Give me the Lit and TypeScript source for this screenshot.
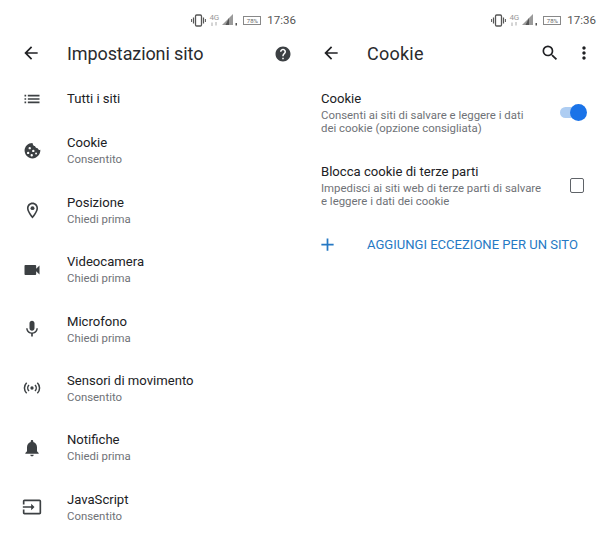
import { LitElement, html, css, svg } from "lit";
import { customElement } from "lit/decorators.js";

const icons: Record<string, unknown> = {
  list: svg`<path d="M3 13h2v-2H3v2zm0 4h2v-2H3v2zm0-8h2V7H3v2zm4 4h14v-2H7v2zm0 4h14v-2H7v2zM7 7v2h14V7H7z"/>`,
  cookie: svg`<path fill-rule="evenodd" d="M21.9 11.2c-1.7.2-2.9-.6-3.2-2.2-1.7.3-3.3-1-3.5-2.7-1.6.1-2.9-1.2-3.2-3.9C6.6 2.3 2 6.6 2 12c0 5.5 4.5 10 10 10 5.6 0 10.300-4.700 9.900-10.800zM8.500 7.500a1.500 1.500 0 1 1 0 3 1.500 1.500 0 0 1 0-3zM6.500 13.500a1.500 1.500 0 1 1 0 3 1.500 1.500 0 0 1 0-3zM13 11a1.500 1.500 0 1 1 0 3 1.500 1.500 0 0 1 0-3zM11 16.500a1.500 1.500 0 1 1 0 3 1.500 1.500 0 0 1 0-3zM16.500 14.500a1.200 1.200 0 1 1 0 2.400 1.200 1.200 0 0 1 0-2.400z"/>`,
  pin: svg`<path d="M12 2C8.130 2 5 5.130 5 9c0 5.250 7 13 7 13s7-7.750 7-13c0-3.870-3.130-7-7-7zM7 9c0-2.760 2.240-5 5-5s5 2.240 5 5c0 2.880-2.880 7.190-5 9.880C9.920 16.210 7 11.850 7 9z"/><circle cx="12" cy="9" r="2.500"/>`,
  video: svg`<path d="M17 10.500V7c0-.550-.450-1-1-1H4c-.550 0-1 .450-1 1v10c0 .550.450 1 1 1h12c.550 0 1-.450 1-1v-3.500l4 4v-11l-4 4z"/>`,
  mic: svg`<path d="M12 14c1.660 0 3-1.340 3-3V5c0-1.660-1.340-3-3-3S9 3.340 9 5v6c0 1.660 1.340 3 3 3zm5.300-3c0 3-2.540 5.100-5.300 5.100S6.700 14 6.700 11H5c0 3.410 2.720 6.230 6 6.720V21h2v-3.280c3.280-.480 6-3.300 6-6.720h-1.700z"/>`,
  sensor: svg`<circle cx="12" cy="12" r="2"/><path fill="none" stroke="currentColor" stroke-width="1.800" d="M8.400 8.400a5.100 5.100 0 0 0 0 7.200M15.600 8.400a5.100 5.100 0 0 1 0 7.200M5.600 5.600a9 9 0 0 0 0 12.800M18.400 5.600a9 9 0 0 1 0 12.800"/>`,
  bell: svg`<path d="M12 22c1.100 0 2-.900 2-2h-4c0 1.100.900 2 2 2zm6-6v-5c0-3.070-1.630-5.640-4.500-6.320V4c0-.830-.670-1.500-1.500-1.500s-1.500.670-1.500 1.500v.680C7.640 5.360 6 7.920 6 11v5l-2 2v1h16v-1l-2-2z"/>`,
  input: svg`<path d="M21 3.010H3c-1.100 0-2 .900-2 2V9h2V4.990h18v14.030H3V15H1v4.010c0 1.100.900 1.980 2 1.980h18c1.100 0 2-.880 2-1.980v-14a2 2 0 0 0-2-2zM11 16l4-4-4-4v3H1v2h10v3z"/>`,
  back: svg`<path d="M20 11H7.830l5.590-5.590L12 4l-8 8 8 8 1.410-1.410L7.830 13H20v-2z"/>`,
  help: svg`<path d="M12 2C6.480 2 2 6.480 2 12s4.480 10 10 10 10-4.480 10-10S17.520 2 12 2zm1 17h-2v-2h2v2zm2.070-7.750-.900.920C13.450 12.900 13 13.500 13 15h-2v-.500c0-1.100.450-2.100 1.170-2.830l1.240-1.260c.370-.360.590-.860.590-1.410 0-1.100-.900-2-2-2s-2 .900-2 2H8c0-2.210 1.790-4 4-4s4 1.790 4 4c0 .880-.360 1.680-.930 2.250z"/>`,
  search: svg`<path d="M15.500 14h-.790l-.280-.270A6.470 6.470 0 0 0 16 9.500 6.500 6.500 0 1 0 9.500 16c1.610 0 3.090-.590 4.230-1.570l.270.280v.790l5 4.990L20.490 19l-4.990-5zm-6 0C7.010 14 5 11.990 5 9.500S7.010 5 9.500 5 14 7.010 14 9.500 11.990 14 9.500 14z"/>`,
  more: svg`<path d="M12 8c1.100 0 2-.900 2-2s-.900-2-2-2-2 .900-2 2 .900 2 2 2zm0 2c-1.100 0-2 .900-2 2s.900 2 2 2 2-.900 2-2-.900-2-2-2zm0 6c-1.100 0-2 .900-2 2s.900 2 2 2 2-.900 2-2-.900-2-2-2z"/>`,
  plus: svg`<path d="M19 13h-6v6h-2v-6H5v-2h6V5h2v6h6v2z"/>`,
};
const ico = (n: string, s = 20) =>
  html`<svg class="ico" width=${s} height=${s} viewBox="0 0 24 24" fill="currentColor">${icons[n]}</svg>`;

const status = html`<div class="status">
  <svg width="15" height="13" viewBox="0 0 15 13" fill="none" stroke="#555" class="vib">
    <rect x="4.500" y="1" width="6" height="11" rx="1.200" stroke-width="1.300"/>
    <path d="M2.500 3.500v6M12.500 3.500v6" stroke-width="1.200"/><path d="M.6 5v3M14.400 5v3" stroke-width="1"/>
  </svg>
  <div class="net">
    <span>4G</span>
    <svg width="8" height="4" viewBox="0 0 8 4" fill="none" stroke="#aaa" stroke-width="1"><path d="M2 4V0.500M6 0v3.500"/></svg>
  </div>
  <svg width="17" height="12" viewBox="0 0 17 12" class="sig">
    <path d="M12 0v11H1z" fill="#9a9a9a"/><path d="M8 4v7H4.500z" fill="#555"/><rect x="14.500" y="9" width="1.500" height="2.500" fill="#555"/>
  </svg>
  <span class="batt">78%</span>
  <span class="time">17:36</span>
</div>`;

const rows: [string, string, string, number][] = [
  ["list", "Tutti i siti", "", 20],
  ["cookie", "Cookie", "Consentito", 19],
  ["pin", "Posizione", "Chiedi prima", 19],
  ["video", "Videocamera", "Chiedi prima", 20],
  ["mic", "Microfono", "Chiedi prima", 20],
  ["sensor", "Sensori di movimento", "Consentito", 20],
  ["bell", "Notifiche", "Chiedi prima", 20],
  ["input", "JavaScript", "Consentito", 20],
];

@customElement("app-root")
export class AppRoot extends LitElement {
  static styles = css`
    :host { display: flex; width: 610px; height: 545px; background: #fff; overflow: hidden;
      font-family: Roboto, "Liberation Sans", sans-serif; color: #202124; }
    .panel { width: 305px; flex: none; display: flex; flex-direction: column; }
    .ico { display: block; flex: none; }
    .status { height: 30px; padding: 10px 9px 0 0; box-sizing: border-box; display: flex; align-items: center;
      justify-content: flex-end; font-size: 11.500px; color: #555; }
    .panel + .panel .status { padding-right: 14px; }
    .vib { margin-right: 3px; }
    .net { font-size: 8px; color: #999; width: 10px; margin-right: 2px; line-height: 8px; display: flex;
      flex-direction: column; align-items: center; }
    .sig { margin-right: 5px; }
    .batt { font-size: 6px; border: 1px solid #888; width: 16px; height: 7px; line-height: 7px; text-align: center;
      margin-right: 6px; color: #666; }
    .head { height: 46px; display: flex; align-items: center; color: #3c4043; }
    .title { font-size: 18px; letter-spacing: -0.1px; color: #2a2b2e; flex: 1; }
    .head2 .title { letter-spacing: 0.25px; }
    .back { width: 67px; padding-left: 21px; box-sizing: border-box; color: #202124; }
    .head2 .back { width: 62px; padding-left: 16px; }
    .acts { display: flex; align-items: center; gap: 14px; padding-right: 16px; color: #202124; }
    .help { padding: 2px 13px 0 0; }
    .list { display: flex; flex-direction: column; }
    .row { display: flex; align-items: center; height: 59.400px; }
    .row:first-child { height: 45.200px; }
    .row .ic { width: 67px; padding-left: 22px; box-sizing: border-box; color: #3c4043; }
    .ic span { display: flex; width: 20px; justify-content: center; }
    .t { font-size: 13.100px; line-height: 17px; color: #202124; }
    .s { font-size: 11.400px; line-height: 16px; color: #6f7277; }
    .set { display: flex; flex-direction: column; padding: 0 16px; }
    .opt { display: flex; align-items: center; justify-content: space-between; height: 73px; }
    .opt .t { margin-bottom: 2px; }
    .opt .s { line-height: 13.500px; }
    .sw { width: 27px; height: 17px; position: relative; margin-right: 7px; }
    .sw i { position: absolute; left: 0; top: 3px; width: 22px; height: 11px; border-radius: 6px; background: #aecdf2; }
    .sw b { position: absolute; right: 0; top: 0; width: 17px; height: 17px; border-radius: 50%; background: #1a73e8; }
    .cb { width: 12.500px; height: 12.500px; border: 1.800px solid #5f6368; border-radius: 2px; margin-right: 10px; }
    .add { display: flex; align-items: center; margin-top: 4px; height: 36px; color: #2679c4; font-size: 13.050px; }
    .add .ico { margin: 0 28.700px 0 -3.700px; }
  `;
  render() {
    return html`
      <div class="panel">
        ${status}
        <div class="head">
          <div class="back">${ico("back")}</div>
          <div class="title">Impostazioni sito</div>
          <div class="help">${ico("help", 18)}</div>
        </div>
        <div class="list">
          ${rows.map(([i, t, s, z]) => html`<div class="row">
            <div class="ic"><span>${ico(i, z)}</span></div>
            <div><div class="t">${t}</div>${s ? html`<div class="s">${s}</div>` : ""}</div>
          </div>`)}
        </div>
      </div>
      <div class="panel">
        ${status}
        <div class="head head2">
          <div class="back">${ico("back")}</div>
          <div class="title">Cookie</div>
          <div class="acts">${ico("search", 20)}${ico("more", 20)}</div>
        </div>
        <div class="set">
          <div class="opt">
            <div><div class="t">Cookie</div><div class="s">Consenti ai siti di salvare e leggere i dati<br />dei cookie (opzione consigliata)</div></div>
            <div class="sw"><i></i><b></b></div>
          </div>
          <div class="opt">
            <div><div class="t">Blocca cookie di terze parti</div><div class="s">Impedisci ai siti web di terze parti di salvare<br />e leggere i dati dei cookie</div></div>
            <div class="cb"></div>
          </div>
          <div class="add">${ico("plus", 21)}<span>AGGIUNGI ECCEZIONE PER UN SITO</span></div>
        </div>
      </div>
    `;
  }
}
